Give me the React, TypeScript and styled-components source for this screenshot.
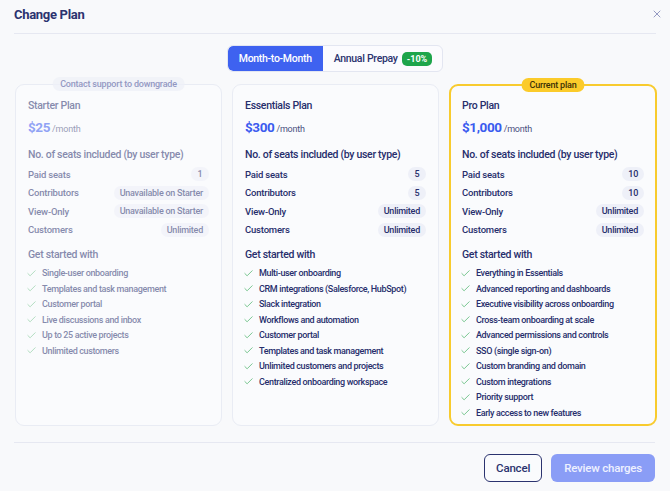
import styled, { createGlobalStyle } from "styled-components";
import { Check, X } from "lucide-react";

const GlobalStyle = createGlobalStyle`
  body {
    margin: 0;
    background: #f8f9fb;
    font-family: Roboto, "Liberation Sans", sans-serif;
    color: #272e6c;
  }
`;

const Modal = styled.div`
  width: 670px;
  height: 491px;
  padding: 0 14px;
  box-sizing: border-box;
  display: flex;
  flex-direction: column;
`;

const Header = styled.header`
  height: 34px;
  display: flex;
  align-items: center;
  justify-content: space-between;
  border-bottom: 1px solid #e6e8f1;
  box-sizing: border-box;
`;

const Title = styled.h1`
  margin: -4px 0 0;
  font-size: 13px;
  font-weight: 700;
  letter-spacing: -0.3px;
  color: #2b336f;
`;

const CloseButton = styled.button`
  border: none;
  background: none;
  padding: 0;
  margin-right: -7px;
  margin-top: -5px;
  color: #7b82b4;
  display: flex;
  cursor: pointer;
`;

const ToggleRow = styled.div`
  display: flex;
  justify-content: center;
  margin-top: 11px;
`;

const Toggle = styled.div`
  display: flex;
  height: 27px;
  border: 1px solid #e3e6f1;
  border-radius: 6px;
  background: #fbfbfe;
  box-sizing: border-box;
  overflow: hidden;
`;

const ToggleOption = styled.button<{ $active?: boolean }>`
  border: none;
  display: flex;
  align-items: center;
  gap: 4px;
  padding: ${({ $active }) => ($active ? "0 11px" : "0 10px 0 11px")};
  font-family: inherit;
  font-size: 10.5px;
  font-weight: 500;
  letter-spacing: -0.3px;
  background: ${({ $active }) => ($active ? "#3e62f0" : "transparent")};
  color: ${({ $active }) => ($active ? "#ffffff" : "#2b336f")};
  border-radius: ${({ $active }) => ($active ? "5px 0 0 5px" : "0")};
  cursor: pointer;
`;

const Discount = styled.span`
  background: #1ea54b;
  color: #fff;
  font-size: 9px;
  font-weight: 700;
  letter-spacing: 0;
  padding: 2px 5px;
  border-radius: 5px;
`;

const Cards = styled.div`
  display: grid;
  grid-template-columns: 207px 207px 208px;
  gap: 10px;
  margin-top: 12px;
  padding-left: 1px;
`;

const Card = styled.section<{ $current?: boolean }>`
  position: relative;
  height: 342px;
  box-sizing: border-box;
  padding: ${({ $current }) => ($current ? "12px 11px" : "13px 12px")};
  border-radius: 9px;
  background: #fafbfd;
  border: ${({ $current }) => ($current ? "2px solid #f8cb2e" : "1px solid #e9ecf4")};
`;

const CardBody = styled.div<{ $muted?: boolean }>`
  opacity: ${({ $muted }) => ($muted ? 0.55 : 1)};
`;

const TopPill = styled.span<{ $current?: boolean; $muted?: boolean }>`
  position: absolute;
  top: -8px;
  left: 50%;
  transform: translateX(-50%);
  white-space: nowrap;
  font-size: 9px;
  font-weight: 500;
  letter-spacing: -0.2px;
  line-height: 14px;
  padding: 0 8px;
  border-radius: 8px;
  background: ${({ $current }) => ($current ? "#fbcb2a" : "#eff1f8")};
  color: ${({ $current }) => ($current ? "#3b3106" : "#7379b0")};
  opacity: ${({ $muted }) => ($muted ? 0.75 : 1)};
`;

const PlanName = styled.h2`
  margin: 0;
  font-size: 10.5px;
  line-height: 16px;
  font-weight: 500;
  letter-spacing: -0.3px;
`;

const Price = styled.div`
  margin-top: 3px;
  display: flex;
  align-items: baseline;
  gap: 2px;
  line-height: 20px;
`;

const Amount = styled.span`
  font-size: 13.5px;
  font-weight: 700;
  letter-spacing: -0.4px;
  color: #3a5bef;
`;

const Per = styled.span`
  font-size: 9px;
  letter-spacing: -0.2px;
  color: #4a5080;
`;

const SectionTitle = styled.h3<{ $gap: number }>`
  margin: ${({ $gap }) => $gap}px 0 0;
  font-size: 10.5px;
  line-height: 16px;
  font-weight: 500;
  letter-spacing: -0.3px;
`;

const SeatList = styled.div`
  margin-top: 2px;
  display: flex;
  flex-direction: column;
  gap: 0.5px;
`;

const SeatRow = styled.div`
  height: 18px;
  display: flex;
  align-items: center;
  justify-content: space-between;
  font-size: 9.5px;
  font-weight: 500;
  letter-spacing: -0.2px;
`;

const SeatValue = styled.span`
  background: #eef0f8;
  border-radius: 7px;
  padding: 0 6px;
  line-height: 14px;
  font-size: 9px;
  letter-spacing: -0.25px;
  min-width: 6px;
  text-align: center;
`;

const Features = styled.ul`
  list-style: none;
  margin: 3px 0 0;
  padding: 0;
`;

const Feature = styled.li`
  height: 15.5px;
  display: flex;
  align-items: center;
  gap: 5px;
  font-size: 9px;
  font-weight: 500;
  letter-spacing: -0.35px;
  white-space: nowrap;

  svg {
    margin-left: -2px;
    flex: none;
  }
`;

const Footer = styled.footer`
  margin-top: 16px;
  margin-right: 1px;
  border-top: 1px solid #e6e8f1;
  display: flex;
  justify-content: flex-end;
  gap: 9px;
  padding-top: 11px;
`;

const Button = styled.button<{ $primary?: boolean }>`
  height: 28px;
  box-sizing: border-box;
  border-radius: 6px;
  font-family: inherit;
  font-size: 11.5px;
  font-weight: 500;
  letter-spacing: -0.2px;
  padding: 0 ${({ $primary }) => ($primary ? "13px" : "11px")};
  border: ${({ $primary }) => ($primary ? "none" : "1.5px solid #2b336f")};
  background: ${({ $primary }) => ($primary ? "#8a9df6" : "#fafbfd")};
  color: ${({ $primary }) => ($primary ? "#eef1ff" : "#2b336f")};
  cursor: pointer;
`;

type Plan = {
  name: string;
  price: string;
  seats: [string, string][];
  features: string[];
  pill?: string;
  current?: boolean;
  muted?: boolean;
};

const plans: Plan[] = [
  {
    name: "Starter Plan",
    price: "$25",
    pill: "Contact support to downgrade",
    muted: true,
    seats: [
      ["Paid seats", "1"],
      ["Contributors", "Unavailable on Starter"],
      ["View-Only", "Unavailable on Starter"],
      ["Customers", "Unlimited"],
    ],
    features: [
      "Single-user onboarding",
      "Templates and task management",
      "Customer portal",
      "Live discussions and inbox",
      "Up to 25 active projects",
      "Unlimited customers",
    ],
  },
  {
    name: "Essentials Plan",
    price: "$300",
    seats: [
      ["Paid seats", "5"],
      ["Contributors", "5"],
      ["View-Only", "Unlimited"],
      ["Customers", "Unlimited"],
    ],
    features: [
      "Multi-user onboarding",
      "CRM integrations (Salesforce, HubSpot)",
      "Slack integration",
      "Workflows and automation",
      "Customer portal",
      "Templates and task management",
      "Unlimited customers and projects",
      "Centralized onboarding workspace",
    ],
  },
  {
    name: "Pro Plan",
    price: "$1,000",
    pill: "Current plan",
    current: true,
    seats: [
      ["Paid seats", "10"],
      ["Contributors", "10"],
      ["View-Only", "Unlimited"],
      ["Customers", "Unlimited"],
    ],
    features: [
      "Everything in Essentials",
      "Advanced reporting and dashboards",
      "Executive visibility across onboarding",
      "Cross-team onboarding at scale",
      "Advanced permissions and controls",
      "SSO (single sign-on)",
      "Custom branding and domain",
      "Custom integrations",
      "Priority support",
      "Early access to new features",
    ],
  },
];

export default function App() {
  return (
    <>
      <GlobalStyle />
      <Modal>
        <Header>
          <Title>Change Plan</Title>
          <CloseButton aria-label="Close">
            <X size={12} strokeWidth={1.6} />
          </CloseButton>
        </Header>

        <ToggleRow>
          <Toggle>
            <ToggleOption $active>Month-to-Month</ToggleOption>
            <ToggleOption>
              Annual Prepay <Discount>-10%</Discount>
            </ToggleOption>
          </Toggle>
        </ToggleRow>

        <Cards>
          {plans.map((plan) => (
            <Card key={plan.name} $current={plan.current}>
              {plan.pill && (
                <TopPill $current={plan.current} $muted={plan.muted}>
                  {plan.pill}
                </TopPill>
              )}
              <CardBody $muted={plan.muted}>
                <PlanName>{plan.name}</PlanName>
                <Price>
                  <Amount>{plan.price}</Amount>
                  <Per>/month</Per>
                </Price>
                <SectionTitle $gap={8}>No. of seats included (by user type)</SectionTitle>
                <SeatList>
                  {plan.seats.map(([label, value]) => (
                    <SeatRow key={label}>
                      <span>{label}</span>
                      <SeatValue>{value}</SeatValue>
                    </SeatRow>
                  ))}
                </SeatList>
                <SectionTitle $gap={8}>Get started with</SectionTitle>
                <Features>
                  {plan.features.map((f) => (
                    <Feature key={f}>
                      <Check size={11} strokeWidth={1.5} color="#3fae5f" />
                      {f}
                    </Feature>
                  ))}
                </Features>
              </CardBody>
            </Card>
          ))}
        </Cards>

        <Footer>
          <Button>Cancel</Button>
          <Button $primary>Review charges</Button>
        </Footer>
      </Modal>
    </>
  );
}
